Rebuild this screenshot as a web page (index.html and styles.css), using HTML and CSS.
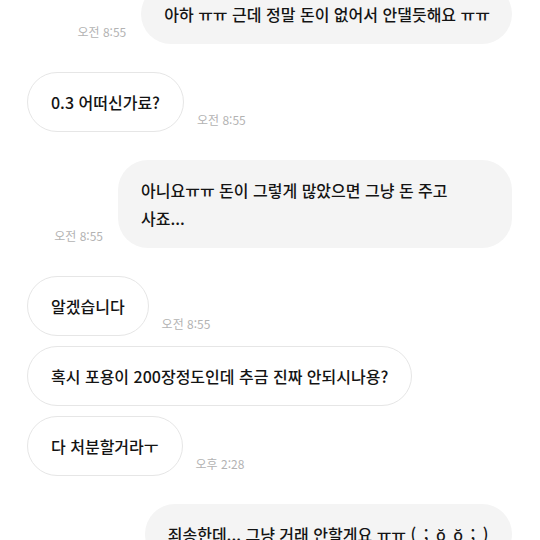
FILE: index.html
```html
<!DOCTYPE html>
<html lang="ko">
<head>
  <meta charset="UTF-8">
  <meta name="viewport" content="width=device-width, initial-scale=1.0">
  <title>채팅</title>
  <link rel="stylesheet" href="styles.css">
</head>
<body>

  <div class="chat">
    <div class="row sent first">
      <span class="time">오전 8:55</span>
      <div class="bubble">아하 ㅠㅠ 근데 정말 돈이 없어서 안댈듯해요 ㅠㅠ</div>
    </div>

    <div class="row recv">
      <div class="bubble">0.3 어떠신가료?</div>
      <span class="time">오전 8:55</span>
    </div>

    <div class="row sent">
      <span class="time">오전 8:55</span>
      <div class="bubble">아니요ㅠㅠ 돈이 그렇게 많았으면 그냥 돈 주고 사죠...</div>
    </div>

    <div class="row recv">
      <div class="bubble">알겠습니다</div>
      <span class="time">오전 8:55</span>
    </div>

    <div class="row recv same">
      <div class="bubble">혹시 포용이 200장정도인데 추금 진짜 안되시나용?</div>
    </div>

    <div class="row recv same">
      <div class="bubble">다 처분할거라ㅜ</div>
      <span class="time">오후 2:28</span>
    </div>

    <div class="row sent">
      <div class="bubble">죄송한데... 그냥 거래 안할게요 ㅠㅠ <span class="kao">( ; ŏ̥̥̥̥ ŏ̥̥̥̥ ; )</span></div>
    </div>
  </div>

</body>
</html>
```

FILE: styles.css
```css
body {
  margin: 0;
  background-color: #ffffff;
  font-family: "Noto Sans CJK KR", "Noto Sans", sans-serif;
  color: #141414;
}

.chat {
  display: flex;
  flex-direction: column;
  padding: 0 28px 0 27px;
  height: 540px;
  overflow: hidden;
}

.row {
  display: flex;
  align-items: flex-end;
  gap: 13px;
  margin-top: 28px;
  flex-shrink: 0;
}

.row.first {
  margin-top: -16px;
}

.row.same {
  margin-top: 10px;
}

.row.sent {
  justify-content: flex-end;
  gap: 15px;
}

.bubble {
  max-width: 349px;
  padding: 16px 23px;
  border-radius: 30px;
  font-size: 16px;
  font-weight: 500;
  line-height: 28px;
  word-break: keep-all;
}

.sent .bubble {
  background-color: #f4f4f4;
  padding: 16px 22px 16px 23px;
}

.recv .bubble {
  background-color: #ffffff;
  border: 1px solid #e6e6e6;
  padding: 15px 23px;
}

.kao {
  letter-spacing: 1.5px;
  white-space: nowrap;
}

.time {
  font-size: 12px;
  line-height: 14px;
  color: #b3b3b3;
  margin-bottom: 5px;
  white-space: nowrap;
}
```
